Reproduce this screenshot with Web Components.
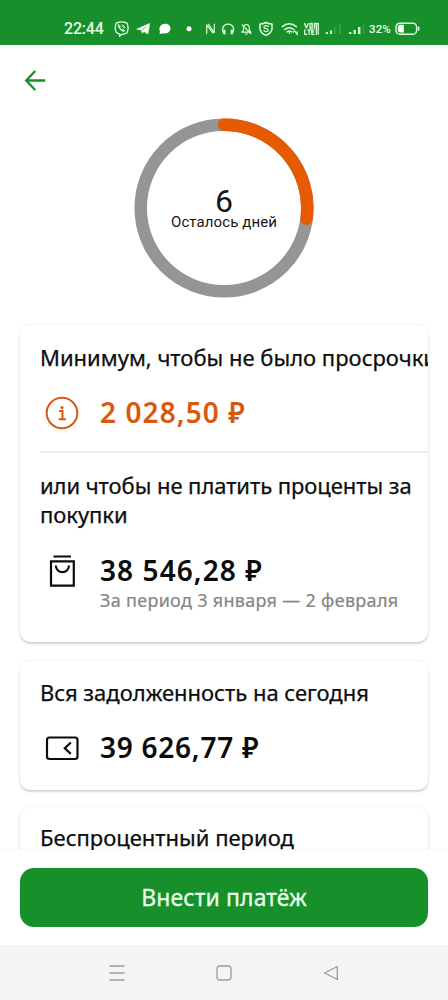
<!DOCTYPE html>
<html lang="ru">
<head>
<meta charset="utf-8">
<title>Внести платёж</title>
<style>
html, body { margin: 0; height: 100%; background: #fff; overflow: hidden; }
</style>
</head>
<body>
<payment-screen></payment-screen>
<script>
const define = (name, html) => customElements.define(name, class extends HTMLElement {
  constructor() {
    super();
    this.attachShadow({ mode: 'open' }).innerHTML = html;
  }
});

define('status-bar', `
<style>
:host { display: block; height: 45px; background: #178f2b; color: #e6ffe6; font-family: Roboto, "Noto Sans", sans-serif; }
.row { display: flex; align-items: center; height: 24px; padding: 17px 0 0 64px; box-sizing: content-box; }
.time { width: 50px; font-size: 16px; font-weight: 500; line-height: 24px; letter-spacing: -.2px; white-space: nowrap; }
svg { display: block; width: 252px; height: 24px; }
.pct { width: 25px; margin-left: 3px; font-size: 11.500px; font-weight: 500; line-height: 24px; letter-spacing: .1px; white-space: nowrap; }
svg.bat { width: 28px; }
</style>
<div class="row">
<span class="time">22:44</span>
<svg viewBox="114 17 252 24" fill="none" stroke="#dcffdc" stroke-width="1.4" stroke-linecap="round" stroke-linejoin="round">
<path d="M116.2 23.2q5.400-2.800 10.800 0q2.200 5 0 9.600q-2.600 1.600-5.400 1.500l-2 1.900v-2.300q-2-.2-3.200-1.300q-2.400-4.600-.2-9.400z" stroke-width="1.3"/>
<path d="M118.400 24.600q-.7 1 .2 2.600q1.900 3.600 5 4.600l1.200-1.200l-2-1.400l-1 .6q-1.500-.7-2.100-2.400l.6-.8z" fill="#dcffdc" stroke-width=".7"/><path d="M122 24.700q2.800.4 3 3.200M122.300 26.300q1.200.2 1.400 1.500" stroke-width=".8"/>
<path d="M137 28.900L149.700 23.500L147.800 34L143.900 31.400L142.300 33.300L141.500 30.400z" fill="#fff" stroke-width=".7"/><path d="M141.800 30.300l4.300-3.400" stroke="#178f2b" stroke-width=".6"/>
<path d="M159.300 34.200l.8-2.500c-2.100-3.700.7-7.900 5-7.900c3.600 0 5.400 2.200 5.400 4.800c0 3.500-3.500 5.700-7.600 4.700z" fill="#fff" stroke="none"/>
<circle cx="189" cy="28.700" r="2.500" fill="#fff" stroke="none"/>
<path d="M206.700 33.500V24.800L212.800 32.900M208.500 24.300L214.300 32.600V24.200" stroke-width="1.2"/>
<path d="M223.800 33.200q-1.700-2.400-1.100-5.100q1.200-4 5.400-4t5.400 4q.5 2.700-1.100 5.100" stroke-width="1.4"/><path d="M224.400 30.600v2.800M231.800 30.600v2.800" stroke-width="2.300"/>
<path d="M241.800 32.200h9l-1.500-2.100v-2.600q-.3-2.700-2.900-3q-2.600.3-2.900 3v2.600zM245.400 34h2M242.300 25l8.500 8.600" stroke-width="1.2"/>
<path d="M266 22.500q3 1.400 6 1.500v5.200q-.6 4-6 6.200q-5.400-2.200-6-6.200V24q3-.1 6-1.500z" stroke-width="1.5"/>
<path d="M268.300 26.500q-1-1-2.600-.8t-1.800 1.500q0 1.300 2.100 1.500t2.200 1.600q-.2 1.300-2 1.400q-1.500 0-2.400-1" stroke-width="1.2"/>
<path d="M282.300 26.700q7-5.700 14 0M284.600 29.500q4.700-3.700 9.400 0M287 31.900q2.500-1.700 4.700 0" stroke-width="1.5"/><path d="M289.300 32.500v1M293.200 32.200l1.300-1.400 1.200 1.400M297.200 31.800v2.600M296 33.200l1.200 1.300" stroke-width="1.200"/>
<g stroke-width="1.3"><path d="M304.600 23.500l1.800 4.500l1.700-4.500M310 23.500h2.200v4.500H310zM314.400 28.200v-4.700h3.800v10.800M316.300 24v10.300M304.700 29.800v4.500h2.200M307.700 29.900h2.900M309.200 30v4.300M314 29.800h-2.200v4.500h2.300M312 32h1.500"/></g>
<g stroke="none"><path d="M325.800 31.900h2.200v2.200h-2.200zM330 30.500h2.200v3.600H330z" fill="#c6f6c6"/><path d="M334.300 27.500h2.200v6.600h-2.200zM339 24h1.800v10.100H339z" fill="#39a249"/><path d="M349 31.900h2.400v2.200H349zM353.500 30h2.300v4.100h-2.300zM358 27h2.400v7.100H358z" fill="#d8ffd8"/><path d="M362.800 24h1.400v10.100h-1.400z" fill="#39a249"/></g>
</svg>
<span class="pct">32%</span>
<svg class="bat" viewBox="394 17 28 24" fill="none"><rect x="396" y="23.200" width="20.600" height="11" rx="3.800" stroke="#dcffdc" stroke-width="1.4"/><path d="M399.800 24.800h4v7.800h-4q-2-.3-2-2.300v-3.200q0-2 2-2.300z" fill="#fff"/><path d="M418.600 27.200v3" stroke="#dcffdc" stroke-width="1.6" stroke-linecap="round"/></svg>
</div>`);

define('app-header', `
<style>
:host { display: block; height: 55px; padding: 15px 0 0 20px; }
svg { display: block; width: 40px; height: 40px; }
</style>
<svg viewBox="20 60 40 40" fill="none" stroke="#178f2b" stroke-width="2.300"><path d="M45.200 80.500H27M35.200 71L26.200 80.500L35.200 90"/></svg>`);

define('days-ring', `
<style>
:host { display: grid; width: 180px; height: 180px; margin: 3px auto 0; font-family: Roboto, "Noto Sans", sans-serif; color: #151515; }
svg, .label { grid-area: 1 / 1; }
.label { padding-top: 70px; text-align: center; }
.n { font-size: 32px; line-height: 27px; }
.t { font-size: 15px; line-height: 15px; letter-spacing: .1px; white-space: nowrap; }
</style>
<svg width="180" height="180" viewBox="0 0 180 180" fill="none" stroke-width="12.500">
<circle cx="90" cy="90" r="83.300" stroke="#959595"/>
<path d="M90 6.700A83.300 83.300 0 0 1 172.600 100.800" stroke="#e65a00" stroke-linecap="round"/>
</svg>
<div class="label"><div class="n"><slot name="count"></slot></div><div class="t"><slot></slot></div></div>`);

define('info-card', `
<style>
:host { display: block; box-sizing: border-box; margin: 0 20px; padding-left: 20px; border-radius: 10px; background: #fff; overflow: hidden; box-shadow: 0 2px 2px #00000026, 0 0 2.500px #0000001c; }
</style><slot></slot>`);

define('card-title', `
<style>
:host { display: block; font: 22px/29px "Noto Sans", "Open Sans", sans-serif; color: #0d0d0d; -webkit-text-stroke: .25px; white-space: nowrap; letter-spacing: var(--ls, 0); }
</style><slot></slot>`);

define('amount-row', `
<style>
:host { display: flex; color: #0b0b0b; font-family: "Noto Sans", "Open Sans", sans-serif; }
.icon { width: 60px; flex: none; }
::slotted(svg) { display: block; }
.sum { font-size: 28px; font-weight: 600; line-height: 36px; white-space: nowrap; letter-spacing: var(--ls, 1.080px); }
.note { font-size: 18px; line-height: 24px; color: #858585; -webkit-text-stroke: .2px; white-space: nowrap; letter-spacing: .3px; }
</style>
<div class="icon"><slot name="icon"></slot></div>
<div><div class="sum"><slot></slot></div><div class="note"><slot name="note"></slot></div></div>`);

define('pay-panel', `
<style>
:host { display: block; box-sizing: border-box; height: 95px; padding: 18px 20px; background: #fff; box-shadow: 0 -1px 1px #00000008; z-index: 1; }
button { display: block; width: 100%; height: 59px; border: 0; border-radius: 14px; background: #178f2b; color: #e9ffe9; font: 23px/59px "Noto Sans", "Open Sans", sans-serif; -webkit-text-stroke: .3px; padding: 0; letter-spacing: .1px; }
</style><button><slot></slot></button>`);

define('nav-bar', `
<style>
:host { display: flex; height: 55px; background: #f4f4f4; align-items: center; justify-content: center; gap: 83px; }
svg { width: 24px; height: 24px; fill: none; stroke: #9c9c9c; stroke-width: 1.300; stroke-linejoin: round; }
</style>
<svg viewBox="0 0 24 24"><path d="M4.500 5h15M4.500 12h15M4.500 19h15"/></svg>
<svg viewBox="0 0 24 24"><rect x="5" y="5" width="14" height="14" rx="3"/></svg>
<svg viewBox="0 0 24 24"><path d="M18.300 5.500v13L5.500 12z"/></svg>`);

define('payment-screen', `
<style>
:host { display: flex; flex-direction: column; width: 448px; height: 1000px; background: #fff; overflow: hidden; }
status-bar, app-header, pay-panel, nav-bar { flex: none; }
app-header { box-sizing: border-box; }
main { flex: 1; min-height: 0; overflow: hidden; padding-top: 15px; }
.c1 { height: 317px; margin-top: 27px; padding-top: 18px; }
.c2 { height: 129px; margin-top: 19px; padding-top: 17px; }
.c3 { height: 130px; margin-top: 17px; padding-top: 16px; }
.r1 { color: #d9580f; margin-top: 22px; height: 57px; }
.line { height: 1.500px; background: #ececec; }
.second { --ls: -.06px; margin-top: 18.500px; }
.r2 { margin-top: 23px; }
.r3 { --ls: .75px; margin-top: 22px; }
</style>
<status-bar></status-bar>
<app-header></app-header>
<main>
<days-ring><span slot="count">6</span>Осталось дней</days-ring>
<info-card class="c1">
<card-title>Минимум, чтобы не было просрочки</card-title>
<amount-row class="r1"><svg slot="icon" width="46" height="40" viewBox="40 394 46 40" fill="none" stroke="#d9580f"><circle cx="62" cy="413" r="15.300" stroke-width="2"/><path d="M59 411h3.500v8M58.600 419.300h7.300" stroke-width="2"/><circle cx="62" cy="407.500" r="1.600" fill="#d9580f" stroke="none"/></svg>2 028,50 ₽</amount-row>
<div class="line"></div>
<card-title class="second">или чтобы не платить проценты за<br>покупки</card-title>
<amount-row class="r2"><svg slot="icon" width="46" height="42" viewBox="40 552 46 42" fill="none" stroke="#0b0b0b" stroke-width="2.200"><path d="M53.500 556.500h17.500M51 561.300h22.800v24.400H51zM55.800 565.600a6.600 6.600 0 0 0 13.200 0"/></svg>38 546,28 ₽<span slot="note">За период 3 января — 2 февраля</span></amount-row>
</info-card>
<info-card class="c2">
<card-title>Вся задолженность на сегодня</card-title>
<amount-row class="r3"><svg slot="icon" width="46" height="38" viewBox="40 729 46 38" fill="none" stroke="#0b0b0b" stroke-width="2.200"><rect x="47" y="737.500" width="30.500" height="21.500" rx="2.500"/><path d="M70.800 742.500l-6 5.700 6 5.700"/></svg>39 626,77 ₽</amount-row>
</info-card>
<info-card class="c3"><card-title>Беспроцентный период</card-title></info-card>
</main>
<pay-panel>Внести платёж</pay-panel>
<nav-bar></nav-bar>`);
</script>
</body>
</html>
